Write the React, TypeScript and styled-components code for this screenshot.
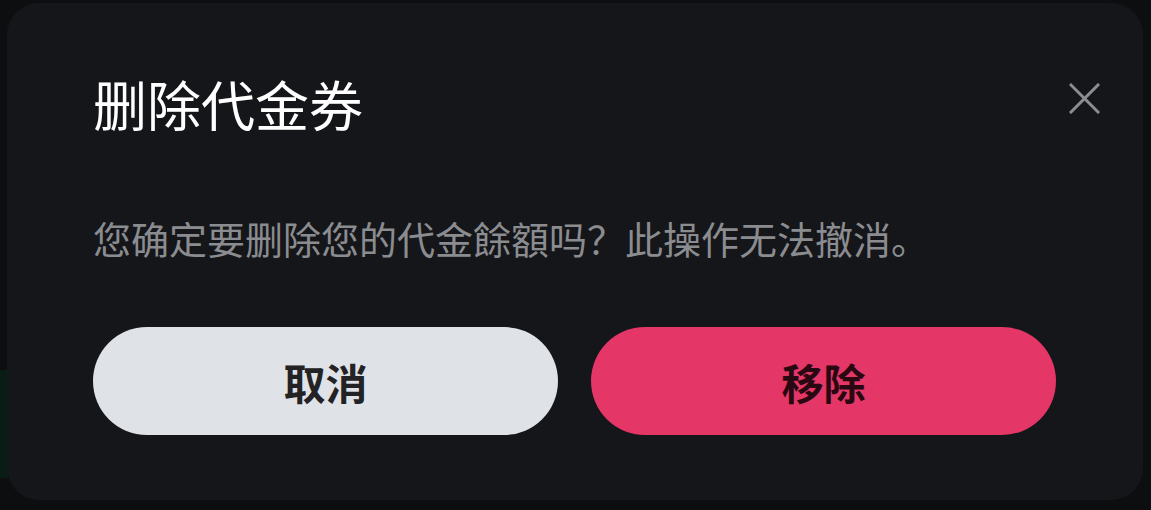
import React from "react";
import styled, { createGlobalStyle } from "styled-components";

const GlobalStyle = createGlobalStyle`
  html, body {
    margin: 0;
    padding: 0;
    height: 100%;
  }
  body {
    background-color: #0d0e10;
    background-image: linear-gradient(#0a1d15, #0a1d15);
    background-size: 8px 108px;
    background-position: 0 370px;
    background-repeat: no-repeat;
    font-family: "Noto Sans CJK SC", "Noto Sans", sans-serif;
  }
`;

const Page = styled.div`
  padding: 3px 8px 10px 7px;
`;

const Dialog = styled.div`
  position: relative;
  box-sizing: border-box;
  height: 497px;
  background: #15161a;
  border-radius: 32px;
  padding: 70px 87px 0 86px;
  display: flex;
  flex-direction: column;
`;

const Title = styled.h2`
  margin: 0;
  font-size: 54px;
  line-height: 62px;
  font-weight: 400;
  color: #ffffff;
`;

const CloseButton = styled.button`
  position: absolute;
  top: 77px;
  right: 41px;
  width: 36px;
  height: 36px;
  padding: 0;
  border: none;
  background: transparent;
  display: flex;
  align-items: center;
  justify-content: center;
  cursor: pointer;
`;

const Message = styled.p`
  margin: 78px 0 0;
  font-size: 38px;
  line-height: 50px;
  color: #8b8c90;
`;

const Actions = styled.div`
  margin-top: 64px;
  display: grid;
  grid-template-columns: 1fr 1fr;
  gap: 33px;
`;

const ActionButton = styled.button<{ $danger?: boolean }>`
  height: 108px;
  border: none;
  border-radius: 54px;
  background: ${(p) => (p.$danger ? "#e43667" : "#dfe2e6")};
  color: ${(p) => (p.$danger ? "#2a0812" : "#232325")};
  font-family: "Noto Sans CJK SC", "Noto Sans", sans-serif;
  font-size: 42px;
  font-weight: 700;
  cursor: pointer;
`;

export default function App() {
  return (
    <Page>
      <GlobalStyle />
      <Dialog>
        <Title>删除代金券</Title>
        <CloseButton aria-label="关闭">
          <svg width="31" height="31" viewBox="0 0 31 31">
            <path d="M2 2 L29 29 M29 2 L2 29" stroke="#8d8d8f" strokeWidth="3" strokeLinecap="square" />
          </svg>
        </CloseButton>
        <Message>您确定要删除您的代金餘額吗？此操作无法撤消。</Message>
        <Actions>
          <ActionButton>取消</ActionButton>
          <ActionButton $danger>移除</ActionButton>
        </Actions>
      </Dialog>
    </Page>
  );
}
